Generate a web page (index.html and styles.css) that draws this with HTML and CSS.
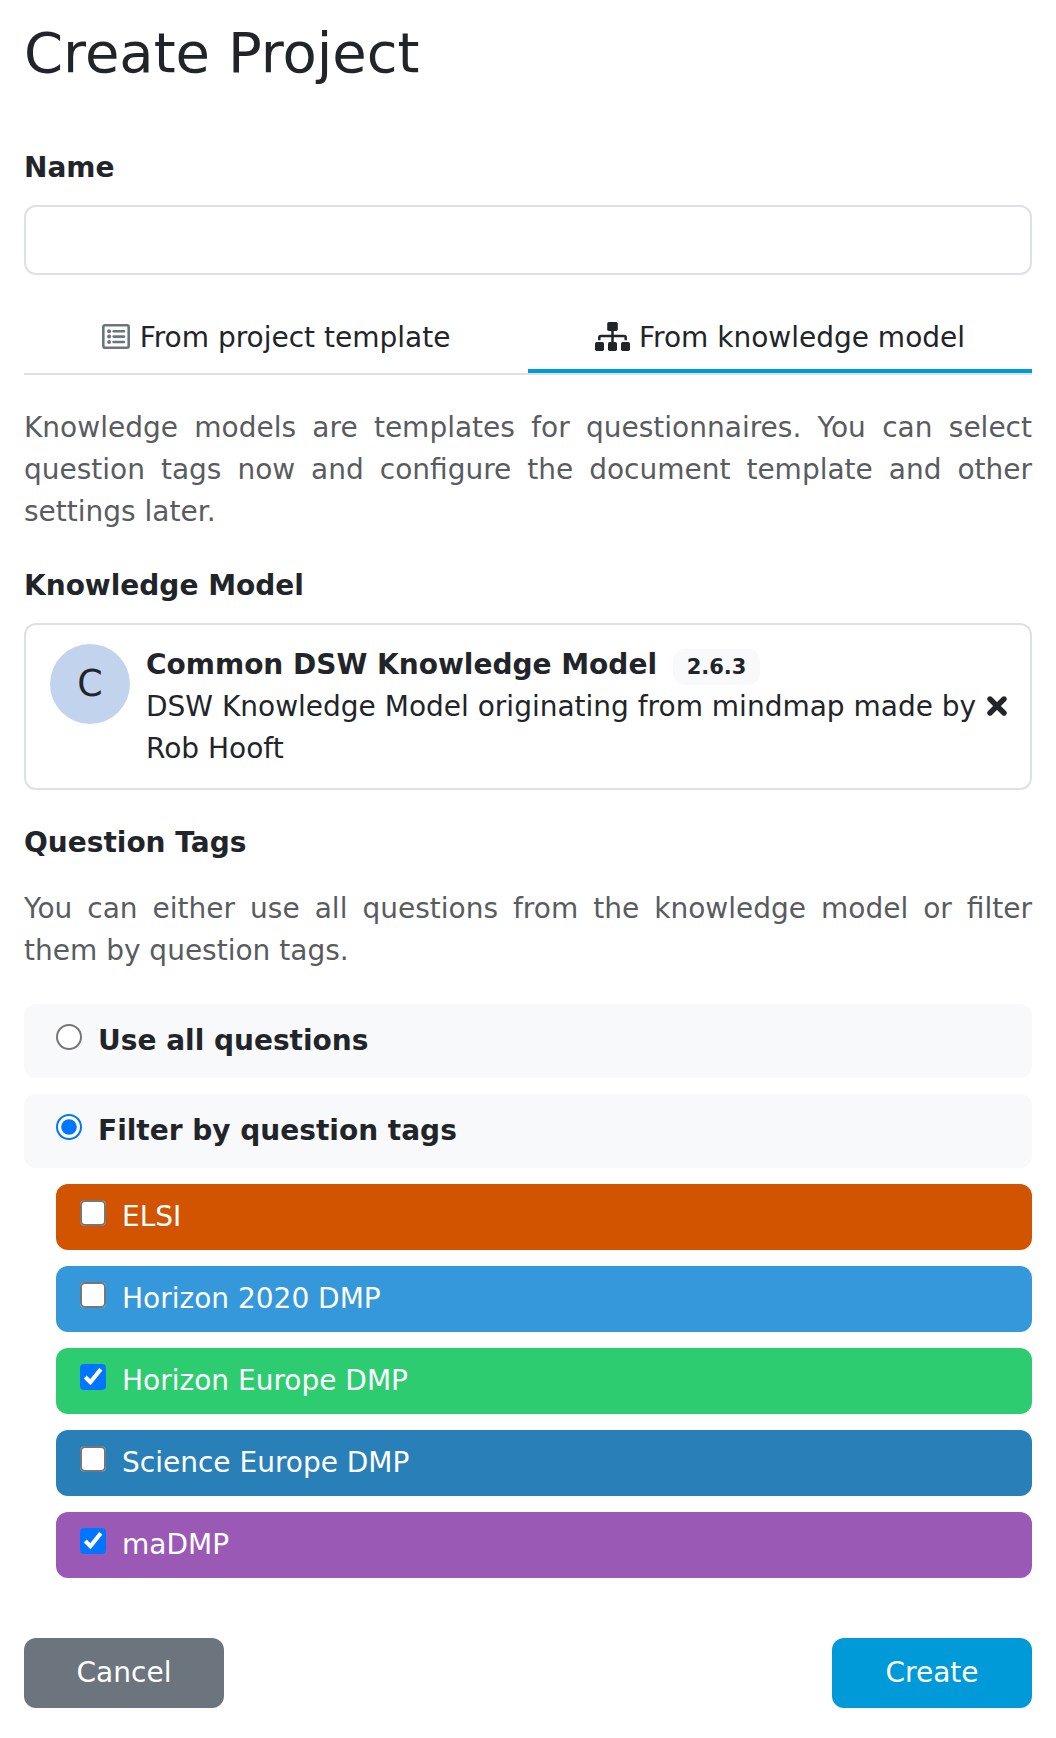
FILE: index.html
```html
<!DOCTYPE html>
<html lang="en">
<head>
<meta charset="utf-8">
<title>Create Project</title>
<link rel="stylesheet" href="styles.css">
</head>
<body>
<main class="page">
  <h1 class="title">Create Project</h1>
  <form class="form">
    <label class="label" for="name">Name</label>
    <input class="text-input" id="name" type="text">
    <nav class="tabs">
      <a class="tab"><svg class="icon icon-list" viewBox="0 0 28 25" width="28" height="25"><rect x="1.3" y="1.3" width="25.4" height="22.4" rx="1.6" fill="none" stroke="currentColor" stroke-width="2.6"/><g fill="currentColor"><circle cx="7.1" cy="7.2" r="2"/><circle cx="7.1" cy="12.6" r="2"/><circle cx="7.1" cy="18" r="2"/></g><path d="M11.6 7.2H22M11.6 12.6H22M11.6 18H22" fill="none" stroke="currentColor" stroke-width="2.6" stroke-linecap="round"/></svg><span>From project template</span></a>
      <a class="tab tab-active"><svg class="icon icon-sitemap" viewBox="0 0 35 29" width="35" height="29"><g fill="currentColor"><rect x="12.2" y="0" width="10.6" height="9" rx="1.7"/><rect x="0" y="20" width="9" height="9" rx="1.7"/><rect x="13" y="20" width="9" height="9" rx="1.7"/><rect x="26" y="20" width="9" height="9" rx="1.7"/></g><path d="M4.3 18.2V15.6Q4.3 14 5.9 14H29.1Q30.7 14 30.7 15.6V18.2M17.5 8V21" fill="none" stroke="currentColor" stroke-width="2.5"/></svg><span>From knowledge model</span></a>
    </nav>
    <p class="hint">Knowledge models are templates for questionnaires. You can select question tags now and configure the document template and other settings later.</p>
    <div class="label label-model">Knowledge Model</div>
    <div class="card">
      <div class="avatar">C</div>
      <div class="card-text">
        <div class="card-title"><strong>Common DSW Knowledge Model</strong><span class="badge">2.6.3</span></div>
        <div>DSW Knowledge Model originating from mindmap made by Rob Hooft</div>
      </div>
      <svg class="remove" viewBox="0 0 20 20" width="20" height="20"><path d="M3 3L17 17M17 3L3 17" fill="none" stroke="currentColor" stroke-width="5.4" stroke-linecap="round"/></svg>
    </div>
    <div class="label label-tags">Question Tags</div>
    <p class="hint hint-tags">You can either use all questions from the knowledge model or filter them by question tags.</p>
    <label class="option"><input class="control" type="radio" name="mode"><span>Use all questions</span></label>
    <label class="option"><input class="control" type="radio" name="mode" checked><span>Filter by question tags</span></label>
    <div class="tags">
      <label class="tag tag-orange"><input class="control" type="checkbox"><span>ELSI</span></label>
      <label class="tag tag-blue"><input class="control" type="checkbox"><span>Horizon 2020 DMP</span></label>
      <label class="tag tag-green"><input class="control" type="checkbox" checked><span>Horizon Europe DMP</span></label>
      <label class="tag tag-navy"><input class="control" type="checkbox"><span>Science Europe DMP</span></label>
      <label class="tag tag-purple"><input class="control" type="checkbox" checked><span>maDMP</span></label>
    </div>
    <div class="actions">
      <button class="btn btn-cancel" type="button">Cancel</button>
      <button class="btn btn-create" type="button">Create</button>
    </div>
  </form>
</main>
</body>
</html>
```
FILE: styles.css
```css
* { box-sizing: border-box; }

body {
  margin: 0;
  background: #fff;
  color: #212529;
  font: 28px/42px "DejaVu Sans", sans-serif;
}

.page { padding: 19px 24px 30px; }

.title {
  margin: 0 0 61px;
  font-size: 56px;
  font-weight: 400;
  line-height: 67px;
}

.form { display: flex; flex-direction: column; }

.label { font-weight: 700; }

.text-input {
  height: 70px;
  margin-top: 16px;
  padding: 12px 24px;
  border: 2px solid #dee2e6;
  border-radius: 12px;
  font: inherit;
}

.tabs {
  display: flex;
  height: 76px;
  margin-top: 24px;
  border-bottom: 2px solid #dee2e6;
}

.tab {
  display: flex;
  flex: 1;
  justify-content: center;
  padding-top: 18px;
}

.tab-active { border-bottom: 4px solid #009ad9; }

.icon { display: block; flex: none; }
.icon-list { margin: 7px 10px 0 0; color: #6c757d; }
.icon-sitemap { margin: 5px 9px 0 0; }

.hint {
  margin: 32px 0 0;
  color: #595c5f;
  text-align: justify;
}

.label-model { margin-top: 32px; }

.card {
  display: flex;
  height: 167px;
  margin-top: 16px;
  padding: 19px 23px 0 24px;
  border: 2px solid #dee2e6;
  border-radius: 12px;
}

.avatar {
  flex: none;
  width: 80px;
  height: 80px;
  border-radius: 50%;
  background: #c2d3ee;
  font-size: 36.4px;
  line-height: 79px;
  text-align: center;
}

.card-text { flex: 1; margin-left: 16px; }
.card-title { display: flex; }

.badge {
  height: 36px;
  margin: 5px 0 0 16px;
  padding: 0 13.65px;
  border-radius: 12px;
  background: #f8f9fa;
  font-size: 21px;
  font-weight: 700;
  line-height: 36px;
}

.remove { flex: none; margin-top: 52px; }

.label-tags { margin-top: 32px; }
.hint-tags { margin: 24px 0 32px; }

.option {
  display: flex;
  height: 74px;
  margin-bottom: 16px;
  padding: 16px 32px;
  border-radius: 12px;
  background: #f8f9fa;
  font-weight: 700;
}

.control {
  flex: none;
  align-self: flex-start;
  zoom: 2;
  margin: 2px 8px 0 0;
}

.tags {
  display: flex;
  flex-direction: column;
  gap: 16px;
  padding-left: 32px;
  color: #fff;
}

.tag {
  display: flex;
  height: 66px;
  padding: 12px 24px;
  border-radius: 12px;
}

.tag-orange { background: #d35400; }
.tag-blue { background: #3498db; }
.tag-green { background: #2ecc71; }
.tag-navy { background: #2980b9; }
.tag-purple { background: #9b59b6; }

.actions {
  display: flex;
  justify-content: space-between;
  margin-top: 60px;
}

.btn {
  width: 200px;
  height: 70px;
  padding: 0 0 1px;
  border: 0;
  border-radius: 12px;
  color: #fff;
  font: inherit;
}

.btn-cancel { background: #6c757d; }
.btn-create { background: #009ad9; }
```
